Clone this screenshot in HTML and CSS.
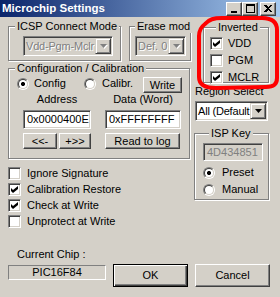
FILE: index.html
```html
<!DOCTYPE html>
<html lang="en">
<head>
    <meta charset="UTF-8">
    <title>Microchip Settings</title>
    <link rel="stylesheet" href="styles.css">
</head>
<body>
    <div class="window">
        <!-- Caption -->
        <div class="titlebar">
            <span class="title">Microchip Settings</span>
            <div class="caption-btns">
                <span class="cbtn"><svg width="8" height="8" viewBox="0 0 8 8" shape-rendering="crispEdges"><rect x="1" y="6" width="6" height="2" fill="#000"/></svg></span>
                <span class="cbtn"><svg width="9" height="9" viewBox="0 0 9 9" shape-rendering="crispEdges"><path d="M0 0h9v9h-9z M1 2v6h7v-6z" fill="#000" fill-rule="evenodd"/></svg></span>
                <span class="cbtn close"><svg width="8" height="7" viewBox="0 0 8 7" shape-rendering="crispEdges"><path d="M0 0h2l2 2 2-2h2l-3 3.5 3 3.5h-2l-2-2-2 2h-2l3-3.5z" fill="#000"/></svg></span>
            </div>
        </div>

        <div class="main">
            <div class="col-left">
                <div class="row-top">
                    <fieldset class="group g-icsp">
                        <legend>ICSP Connect Mode</legend>
                        <div class="combo disabled icsp-combo">
                            <span class="combo-text">Vdd-Pgm-Mclr</span>
                            <span class="combo-btn"><svg width="7" height="4" viewBox="0 0 7 4"><path d="M0 0h7l-3.5 4z" fill="#808080"/></svg></span>
                        </div>
                    </fieldset>
                    <fieldset class="group g-erase">
                        <legend>Erase mod</legend>
                        <div class="combo disabled erase-combo">
                            <span class="combo-text">Def. 0</span>
                            <span class="combo-btn"><svg width="7" height="4" viewBox="0 0 7 4"><path d="M0 0h7l-3.5 4z" fill="#808080"/></svg></span>
                        </div>
                    </fieldset>
                </div>

                <fieldset class="group g-config">
                    <legend>Configuration / Calibration</legend>
                    <div class="cfg-radios">
                        <label class="opt opt-config"><span class="radio on"><span></span></span>Config</label>
                        <label class="opt opt-calibr"><span class="radio"><span></span></span>Calibr.</label>
                        <button class="btn btn-write">Write</button>
                    </div>
                    <div class="cfg-grid">
                        <div class="cfg-label">Address</div>
                        <div class="cfg-label">Data (Word)</div>
                        <div class="edit">0x0000400E</div>
                        <div class="edit">0xFFFFFFFF</div>
                        <div class="nav-btns">
                            <button class="btn btn-prev">&lt;&lt;-</button>
                            <button class="btn btn-next">+&gt;&gt;</button>
                        </div>
                        <button class="btn btn-read">Read to log</button>
                    </div>
                </fieldset>

                <div class="checks">
                    <label class="check-row"><span class="cb"></span>Ignore Signature</label>
                    <label class="check-row"><span class="cb"><svg width="7" height="7" viewBox="0 0 7 7"><path d="M0 2l2 2 5-4v3l-5 4-2-2z" fill="#000"/></svg></span>Calibration Restore</label>
                    <label class="check-row"><span class="cb"><svg width="7" height="7" viewBox="0 0 7 7"><path d="M0 2l2 2 5-4v3l-5 4-2-2z" fill="#000"/></svg></span>Check at Write</label>
                    <label class="check-row"><span class="cb"></span>Unprotect at Write</label>
                </div>
            </div>

            <div class="col-right">
                <fieldset class="group g-inv">
                    <legend>Inverted</legend>
                    <label class="inv-row"><span class="cb"><svg width="7" height="7" viewBox="0 0 7 7"><path d="M0 2l2 2 5-4v3l-5 4-2-2z" fill="#000"/></svg></span>VDD</label>
                    <label class="inv-row"><span class="cb"></span>PGM</label>
                    <label class="inv-row"><span class="cb"><svg width="7" height="7" viewBox="0 0 7 7"><path d="M0 2l2 2 5-4v3l-5 4-2-2z" fill="#000"/></svg></span>MCLR</label>
                </fieldset>

                <div class="region-label">Region Select</div>
                <div class="combo region-combo">
                    <span class="combo-text">All (Default</span>
                    <span class="combo-btn"><svg width="7" height="4" viewBox="0 0 7 4"><path d="M0 0h7l-3.5 4z" fill="#000"/></svg></span>
                </div>

                <fieldset class="group g-isp">
                    <legend>ISP Key</legend>
                    <div class="edit disabled isp-edit">4D434851</div>
                    <label class="isp-row"><span class="radio on"><span></span></span>Preset</label>
                    <label class="isp-row"><span class="radio"><span></span></span>Manual</label>
                </fieldset>
            </div>
        </div>

        <div class="bottom">
            <div class="chip">
                <div class="chip-label">Current Chip :</div>
                <div class="chip-field">PIC16F84</div>
            </div>
            <button class="btn btn-default btn-ok">OK</button>
            <button class="btn btn-cancel">Cancel</button>
        </div>

        <!-- red marker drawn over the dialog -->
        <svg class="annot" width="280" height="297" viewBox="0 0 280 297">
            <path d="M205 24 C209 19 214 18 222 18 L262 18 C272 18 277 22 277 30 L277 78 C277 85 273 87 266 87 L216 88 C206 88 199 85 199 77 L199 36 C199 30 201 27 205 24 Z" fill="none" stroke="#ff0000" stroke-width="4"/>
        </svg>
    </div>
</body>
</html>
```

FILE: styles.css
```css
* {
    box-sizing: border-box;
}

body {
    margin: 0;
    background: #d4d0c8;
}

.window {
    position: relative;
    width: 280px;
    height: 297px;
    overflow: hidden;
    background: #d4d0c8;
    color: #000;
    font-family: "Liberation Sans", Arial, sans-serif;
    font-size: 11px;
    line-height: 13px;
}

/* caption */
.titlebar {
    height: 17px;
    display: flex;
    align-items: center;
    justify-content: space-between;
    padding: 0 4px 0 2px;
    background: linear-gradient(90deg, #0a246a, #a6caf0);
}

.title {
    color: #fff;
    font-weight: bold;
    font-size: 11.5px;
}

.caption-btns {
    display: flex;
}

.cbtn {
    width: 16px;
    height: 14px;
    display: flex;
    align-items: center;
    justify-content: center;
    background: #d4d0c8;
    border: 1px solid;
    border-color: #fff #404040 #404040 #fff;
    box-shadow: inset -1px -1px #808080;
}

.cbtn.close {
    margin-left: 2px;
}

/* layout */
.main {
    display: flex;
    height: 231px;
    padding-left: 8px;
}

.col-left {
    width: 184px;
}

.col-right {
    width: 76px;
    margin-left: 2px;
}

.row-top {
    display: flex;
    margin-top: 3px;
    margin-bottom: 1px;
}

/* group boxes */
.group {
    margin: 0;
    padding: 0;
    min-width: 0;
    border: 1px solid #808080;
    box-shadow: inset 1px 1px #fff, 1px 1px #fff;
}

.group legend {
    margin-left: 6px;
    padding: 0 2px;
    background: #d4d0c8;
    white-space: nowrap;
    line-height: 13px;
}

.g-icsp {
    width: 113px;
    height: 41px;
}

.g-erase {
    width: 62px;
    height: 41px;
    margin-left: 8px;
}

.g-erase legend {
    margin-left: 5px;
}

.g-config {
    width: 182px;
    height: 97px;
}

.g-inv {
    width: 66px;
    height: 62px;
    margin: 4px 0 0 9px;
    padding: 1px 0 0 6px;
}

.g-isp {
    width: 75px;
    height: 73px;
    margin-top: 6px;
    padding-left: 8px;
}

/* controls */
.combo {
    display: flex;
    height: 20px;
    padding: 1px;
    background: #fff;
    border: 1px solid;
    border-color: #808080 #fff #fff #808080;
    box-shadow: inset 1px 1px #404040, inset -1px -1px #d4d0c8;
}

.combo-text {
    flex: 1;
    min-width: 0;
    overflow: hidden;
    white-space: nowrap;
    padding: 2px 0 0 1px;
}

.combo-btn {
    width: 16px;
    flex: none;
    display: flex;
    align-items: center;
    justify-content: center;
    background: #d4d0c8;
    border: 1px solid;
    border-color: #d4d0c8 #404040 #404040 #d4d0c8;
    box-shadow: inset 1px 1px #fff, inset -1px -1px #808080;
}

.combo.disabled {
    background: #d4d0c8;
}

.combo.disabled .combo-text {
    color: #808080;
    text-shadow: 1px 1px #fff;
}

.combo.disabled svg {
    filter: drop-shadow(1px 1px 0 #fff);
}

.icsp-combo {
    width: 90px;
    margin: 3px 0 0 14px;
}

.icsp-combo .combo-text,
.region-combo .combo-text {
    letter-spacing: -0.2px;
}

.erase-combo {
    width: 51px;
    margin: 3px 0 0 5px;
}

.region-combo {
    width: 73px;
    margin: 3px 0 0 1px;
}

.edit {
    height: 19px;
    display: flex;
    align-items: center;
    padding: 0 3px;
    background: #fff;
    border: 1px solid;
    border-color: #808080 #fff #fff #808080;
    box-shadow: inset 1px 1px #404040, inset -1px -1px #d4d0c8;
    white-space: nowrap;
    overflow: hidden;
}

.edit.disabled {
    background: #d4d0c8;
    color: #808080;
}

.isp-edit {
    width: 60px;
    height: 18px;
    margin-top: 3px;
}

.btn {
    padding: 0;
    font: inherit;
    color: #000;
    background: #d4d0c8;
    border: 1px solid;
    border-color: #fff #404040 #404040 #fff;
    box-shadow: inset -1px -1px #808080;
}

.btn-default {
    border-color: #000;
    box-shadow: inset 1px 1px #fff, inset -1px -1px #404040, inset -2px -2px #808080;
}

.cb {
    width: 13px;
    height: 13px;
    flex: none;
    display: flex;
    align-items: center;
    justify-content: center;
    background: #fff;
    border: 1px solid;
    border-color: #808080 #fff #fff #808080;
    box-shadow: inset 1px 1px #404040, inset -1px -1px #d4d0c8;
}

.radio {
    width: 12px;
    height: 12px;
    flex: none;
    border-radius: 50%;
    border: 1px solid;
    border-color: #808080 #fff #fff #808080;
}

.radio span {
    display: block;
    width: 10px;
    height: 10px;
    border-radius: 50%;
    border: 1px solid;
    border-color: #404040 #d4d0c8 #d4d0c8 #404040;
    background: #fff;
}

.radio.on span {
    background: radial-gradient(circle, #000 1.8px, #fff 2.3px);
}

/* configuration box */
.cfg-radios {
    display: flex;
    align-items: flex-start;
    height: 16px;
    margin-top: 2px;
    padding-left: 8px;
}

.opt {
    display: flex;
    align-items: center;
    height: 13px;
}

.opt .radio {
    margin-right: 5px;
}

.opt-config {
    width: 67px;
}

.opt-calibr {
    width: 59px;
}

.opt-calibr .radio {
    margin-right: 6px;
}

.btn-write {
    width: 39px;
    height: 16px;
}

.cfg-grid {
    display: grid;
    grid-template-columns: 68px 76px;
    column-gap: 14px;
    padding-left: 14px;
}

.cfg-label {
    text-align: center;
    line-height: 12px;
    margin-bottom: 5px;
}

.nav-btns {
    display: flex;
    margin-top: 4px;
}

.btn-prev {
    width: 34px;
    height: 16px;
}

.btn-next {
    width: 32px;
    height: 16px;
    margin-left: 2px;
}

.btn-read {
    width: 75px;
    height: 16px;
    margin-top: 4px;
}

/* check boxes */
.checks {
    margin-top: 6px;
}

.check-row,
.inv-row,
.isp-row {
    display: flex;
    align-items: center;
}

.check-row {
    height: 16px;
}

.check-row .cb {
    margin-right: 6px;
}

.inv-row {
    height: 17px;
}

.inv-row .cb {
    margin-right: 5px;
}

.region-label {
    margin: 2px 0 0 1px;
}

.isp-row {
    height: 17px;
}

.isp-row:first-of-type {
    margin-top: 3px;
}

.isp-row .radio {
    margin-right: 7px;
}

/* bottom row */
.bottom {
    display: flex;
    align-items: flex-start;
    padding-left: 8px;
}

.chip {
    width: 98px;
}

.chip-label {
    padding-left: 9px;
}

.chip-field {
    height: 15px;
    margin-top: 4px;
    text-align: center;
    line-height: 13px;
    border: 1px solid;
    border-color: #808080 #fff #fff #808080;
}

.btn-ok,
.btn-cancel {
    width: 75px;
    height: 23px;
    margin: 16px 0 0 7px;
}

.annot {
    position: absolute;
    top: 0;
    left: 0;
    pointer-events: none;
}
```
